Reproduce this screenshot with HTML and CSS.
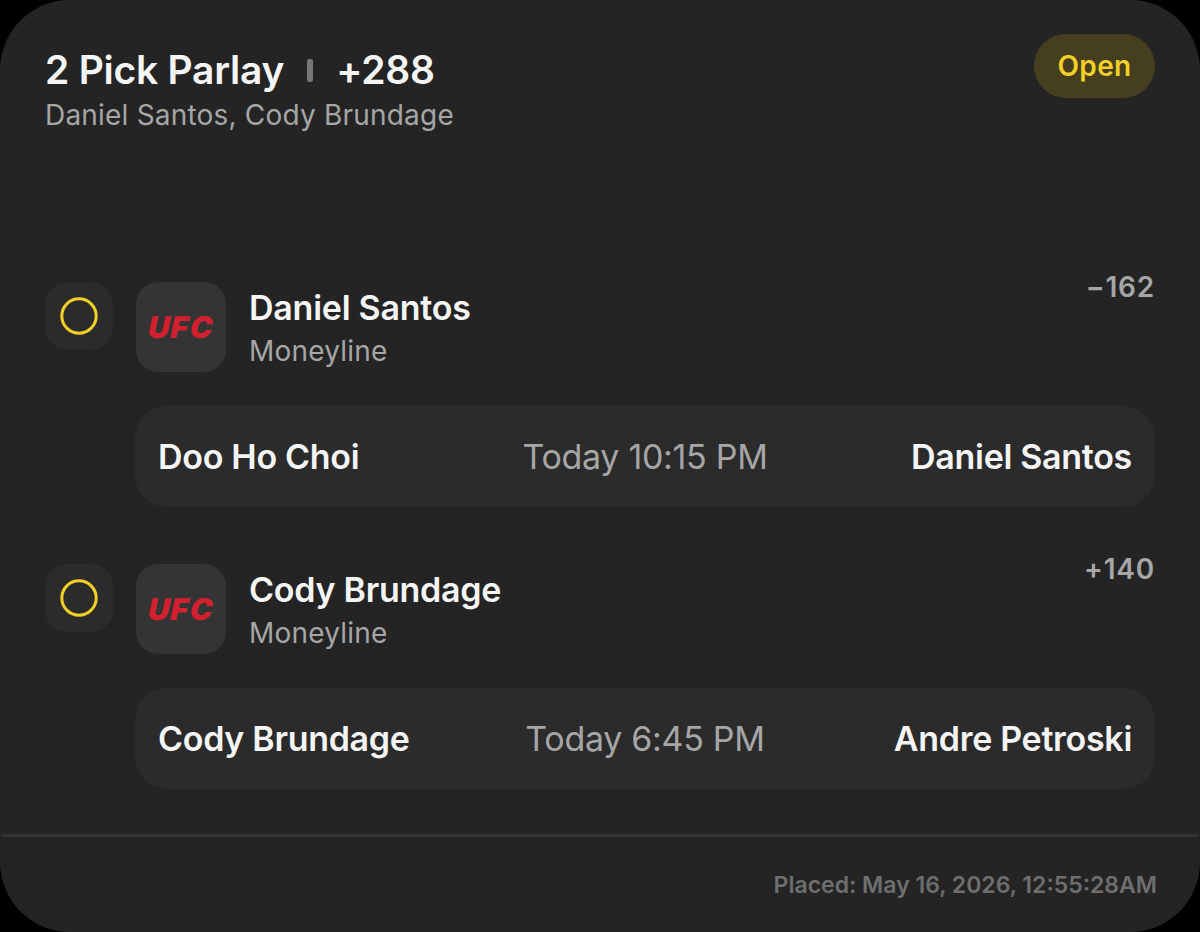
FILE: index.html
```html
<!DOCTYPE html>
<html lang="en">
<head>
    <meta charset="UTF-8">
    <meta name="viewport" content="width=device-width, initial-scale=1.0">
    <title>2 Pick Parlay</title>
    <link rel="stylesheet" href="styles.css">
</head>
<body>
    <div class="bet-card">
        <header class="bet-header">
            <div class="bet-summary">
                <h1><span class="bet-title">2 Pick Parlay</span><span class="separator"></span><span class="total-odds">+288</span></h1>
                <p class="subtitle picks">Daniel Santos, Cody Brundage</p>
            </div>
            <span class="status">Open</span>
        </header>
        <main class="legs">
            <section class="leg">
                <div class="leg-status">
                    <svg width="38" height="38" viewBox="0 0 38 38" fill="none" stroke="#f2d027" stroke-width="3"><circle cx="19" cy="19" r="17.2"/></svg>
                </div>
                <div class="leg-body">
                    <div class="leg-top">
                        <div class="league">
                            <svg width="86" height="50" viewBox="0 0 86 50"><text class="league-name" transform="translate(9.5 36) skewX(-3)" x="0 22.5 42" y="0">UFC</text></svg>
                        </div>
                        <div class="pick">
                            <h2>Daniel Santos</h2>
                            <p class="subtitle">Moneyline</p>
                        </div>
                        <span class="odds">−162</span>
                    </div>
                    <div class="matchup">
                        <span class="fighter">Doo Ho Choi</span>
                        <span class="time">Today 10:15 PM</span>
                        <span class="fighter">Daniel Santos</span>
                    </div>
                </div>
            </section>
            <section class="leg">
                <div class="leg-status">
                    <svg width="38" height="38" viewBox="0 0 38 38" fill="none" stroke="#f2d027" stroke-width="3"><circle cx="19" cy="19" r="17.2"/></svg>
                </div>
                <div class="leg-body">
                    <div class="leg-top">
                        <div class="league">
                            <svg width="86" height="50" viewBox="0 0 86 50"><text class="league-name" transform="translate(9.5 36) skewX(-3)" x="0 22.5 42" y="0">UFC</text></svg>
                        </div>
                        <div class="pick">
                            <h2>Cody Brundage</h2>
                            <p class="subtitle">Moneyline</p>
                        </div>
                        <span class="odds">+140</span>
                    </div>
                    <div class="matchup">
                        <span class="fighter">Cody Brundage</span>
                        <span class="time">Today 6:45 PM</span>
                        <span class="fighter">Andre Petroski</span>
                    </div>
                </div>
            </section>
        </main>
        <footer class="bet-footer">Placed: May 16, 2026, 12:55:28AM</footer>
    </div>
</body>
</html>
```
FILE: styles.css
```css
* {
    box-sizing: border-box;
}
body {
    margin: 0;
    background-color: #000;
    font-family: 'Inter', sans-serif;
    color: #f5f5f5;
}
h1, h2, p {
    margin: 0;
}
.bet-card {
    display: flex;
    flex-direction: column;
    height: 932px;
    background-color: #242424;
    border-radius: 70px;
    overflow: hidden;
}
.bet-header {
    display: flex;
    justify-content: space-between;
    align-items: flex-start;
    height: 282px;
    padding: 34px 45px 0;
}
.bet-summary {
    padding-top: 12px;
}
h1 {
    display: flex;
    align-items: center;
    font-size: 39px;
    font-weight: 600;
    line-height: 48px;
    letter-spacing: -0.25px;
}
.separator {
    width: 6px;
    height: 23px;
    margin: 0 23px;
    border-radius: 2px;
    background-color: #757575;
}
.subtitle {
    font-size: 28px;
    line-height: 36px;
    letter-spacing: 0.2px;
    color: #a6a6a6;
}
.picks {
    margin-top: 3px;
}
.status {
    width: 121px;
    height: 64px;
    border-radius: 32px;
    background-color: #453e1f;
    color: #f2d027;
    font-size: 28px;
    font-weight: 600;
    line-height: 64px;
    letter-spacing: 0.3px;
    text-align: center;
}
.legs {
    display: flex;
    flex-direction: column;
    gap: 57px;
    height: 552px;
    padding: 0 45px;
}
.leg {
    display: flex;
    gap: 22px;
}
.leg-status {
    display: flex;
    justify-content: center;
    align-items: center;
    width: 68px;
    height: 68px;
    border-radius: 22px;
    background-color: #2b2b2b;
}
.leg-body {
    flex-grow: 1;
}
.leg-top {
    display: flex;
    align-items: flex-start;
    height: 124px;
    padding-left: 1px;
}
.league {
    display: flex;
    justify-content: center;
    align-items: center;
    width: 90px;
    height: 90px;
    border-radius: 22px;
    background-color: #343434;
}
.league-name {
    font-size: 30px;
    font-weight: 900;
    font-style: italic;
    fill: #d2202f;
}
.pick {
    flex-grow: 1;
    padding: 5px 0 0 23px;
}
h2 {
    font-size: 34px;
    font-weight: 600;
    line-height: 42px;
    letter-spacing: -0.25px;
}
.pick .subtitle {
    margin-top: 4px;
}
.odds {
    margin-top: -11px;
    font-size: 28px;
    font-weight: 600;
    line-height: 32px;
    letter-spacing: 0.8px;
    color: #a6a6a6;
}
.matchup {
    display: flex;
    align-items: center;
    height: 101px;
    padding: 0 23px;
    border-radius: 32px;
    background-color: #2b2b2b;
    font-size: 34px;
    letter-spacing: -0.3px;
}
.fighter {
    flex: 1;
    font-weight: 600;
}
.fighter:last-child {
    text-align: right;
}
.time {
    color: #a6a6a6;
}
.bet-footer {
    flex-grow: 1;
    margin: 0 1px;
    padding: 34px 42px 0;
    border-top: 3px solid #333;
    font-size: 23px;
    font-weight: 600;
    line-height: 28px;
    text-align: right;
    color: #6e6e6e;
}
```
